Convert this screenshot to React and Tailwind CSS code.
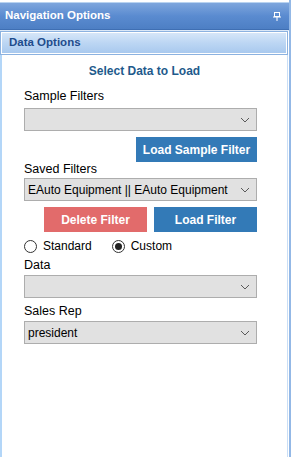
import React, { useState } from "react";

const font = { fontFamily: '"Liberation Sans", Arial, sans-serif' };

function Chevron() {
  return (
    <svg width="10" height="6" viewBox="0 0 10 6" className="shrink-0">
      <polyline
        points="1,1 5,5 9,1"
        fill="none"
        stroke="#5a5a5a"
        strokeWidth="1"
      />
    </svg>
  );
}

function SelectBox({ value }) {
  return (
    <div className="flex items-center justify-between h-[23px] w-[233px] border border-[#adadad] bg-[#e1e1e1] pl-[3px] pr-[6px] text-[12px] text-black">
      <span>{value}</span>
      <Chevron />
    </div>
  );
}

function Radio({ checked, label, onClick }) {
  return (
    <button onClick={onClick} className="flex items-center gap-[6px]">
      <span className="flex items-center justify-center w-[13px] h-[13px] rounded-full border border-[#333333] bg-white">
        {checked && <span className="w-[7px] h-[7px] rounded-full bg-[#222222]" />}
      </span>
      <span className="text-[12px] text-black leading-[14px]">{label}</span>
    </button>
  );
}

export default function App() {
  const [mode, setMode] = useState("custom");

  return (
    <div style={font} className="w-[291px] h-[457px] bg-white flex flex-col border-r-2 border-[#93b8e6]">
      {/* top strip */}
      <div className="h-[3px] bg-white border-b border-[#b9d3f0]" />

      {/* Navigation Options header */}
      <div className="h-[27px] flex items-center justify-between pl-[5px] pr-[8px] bg-gradient-to-b from-[#7ea6dd] via-[#5a8bd0] to-[#4d7fc4] border-b border-[#3f6fb3]">
        <span className="text-white font-bold text-[11.5px]">Navigation Options</span>
        <svg width="8" height="9" viewBox="0 0 8 9">
          <rect x="1.5" y="0.5" width="5" height="4" fill="none" stroke="white" strokeWidth="1" />
          <line x1="0" y1="5" x2="8" y2="5" stroke="white" strokeWidth="1" />
          <line x1="4" y1="5" x2="4" y2="9" stroke="white" strokeWidth="1" />
        </svg>
      </div>

      <div className="h-[1px] bg-[#dbe8f7]" />

      {/* Data Options sub header */}
      <div className="h-[24px] border border-[#8cb2e0] mr-[1px]">
        <div className="h-full flex items-center pl-[7px] border border-white bg-gradient-to-b from-[#d6e6f8] via-[#bcd6f3] to-[#a9c9ee]">
          <span className="text-[#1f4c8c] font-bold text-[11.5px]">Data Options</span>
        </div>
      </div>

      {/* content */}
      <div className="flex-1 flex flex-col border-l-2 border-[#b3d6f8] mr-[1px] border-r border-r-[#c9def6] pl-[22px] pt-[9px]">
        <div className="text-center text-[#1e5a8c] font-bold text-[12px] leading-[14px] pr-[22px]">
          Select Data to Load
        </div>

        <div className="mt-[11px] text-[12.5px] leading-[14px] text-black">Sample Filters</div>
        <div className="mt-[5px]">
          <SelectBox value="" />
        </div>
        <div className="flex justify-start mt-[6px] pl-[112px]">
          <button className="w-[121px] h-[25px] bg-[#337ab7] text-white font-bold text-[12px]">
            Load Sample Filter
          </button>
        </div>

        <div className="text-[12.5px] leading-[14px] text-black">Saved Filters</div>
        <div className="mt-[2px]">
          <SelectBox value="EAuto Equipment || EAuto Equipment" />
        </div>
        <div className="flex gap-[7px] mt-[6px] pl-[20px]">
          <button className="w-[103px] h-[25px] bg-[#e26b6b] text-white font-bold text-[12px]">
            Delete Filter
          </button>
          <button className="w-[103px] h-[25px] bg-[#337ab7] text-white font-bold text-[12px]">
            Load Filter
          </button>
        </div>

        <div className="flex gap-[20px] mt-[7px] items-center">
          <Radio checked={mode === "standard"} label="Standard" onClick={() => setMode("standard")} />
          <Radio checked={mode === "custom"} label="Custom" onClick={() => setMode("custom")} />
        </div>

        <div className="mt-[5px] text-[12.5px] leading-[14px] text-black">Data</div>
        <div className="mt-[3px]">
          <SelectBox value="" />
        </div>

        <div className="mt-[6px] text-[12.5px] leading-[14px] text-black">Sales Rep</div>
        <div className="mt-[3px]">
          <SelectBox value="president" />
        </div>
      </div>
    </div>
  );
}
